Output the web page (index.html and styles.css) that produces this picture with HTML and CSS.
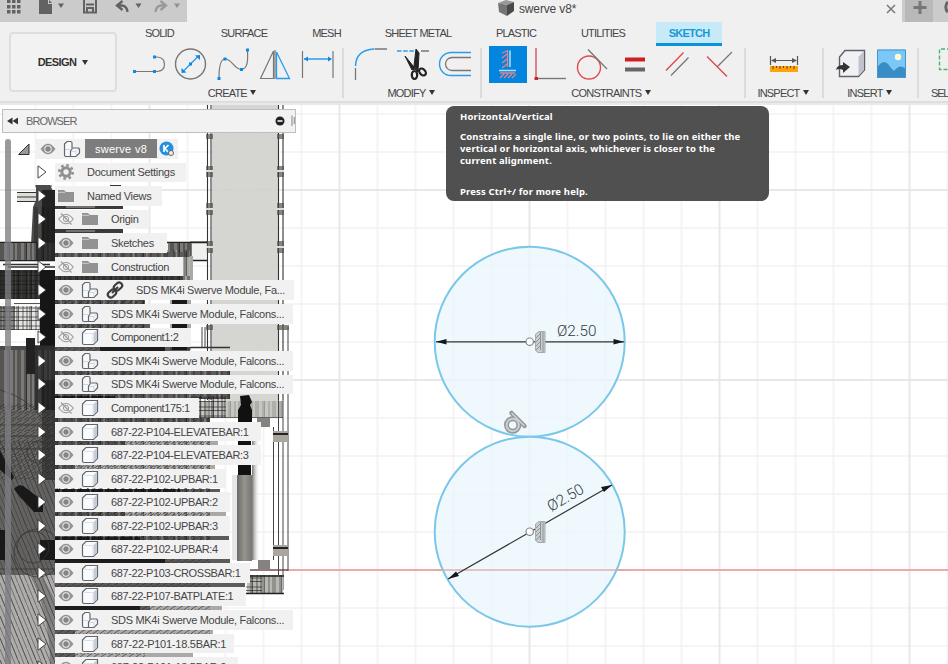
FILE: index.html
```html
<!DOCTYPE html>
<html lang="en">
<head>
<meta charset="utf-8">
<title>swerve v8*</title>
<link rel="stylesheet" href="styles.css">
</head>
<body>
<svg class="sprite" aria-hidden="true">
  <symbol id="eye" viewBox="0 0 16 12"><path d="M.5 6Q8-4.500 15.500 6Q8 16.500.500 6Z" fill="#949494"/><circle cx="8" cy="6" r="3.700" fill="#eee"/><circle cx="8" cy="6" r="2.700" fill="#858585"/></symbol>
  <symbol id="eye-off" viewBox="0 0 16 12"><path d="M.7 6Q8-3 15.300 6Q8 15.500.700 6ZM3 .5L13.500 11.500" fill="none" stroke="#999" stroke-width="1.100"/><circle cx="8" cy="6" r="2.600" fill="none" stroke="#999"/></symbol>
  <symbol id="folder" viewBox="0 0 16 14"><path d="M0 1H6L8 3H16V13H0Z" fill="#929292"/><path d="M0 3.300H7" stroke="#ddd" stroke-width=".8"/></symbol>
  <symbol id="box" viewBox="0 0 18 18"><path d="M1.500 5L5 1.500H16.500V12.500L12.500 16.500H3Q1.500 16.500 1.500 15Z" fill="#fafbfc" stroke="#62676f" stroke-width="1.200"/><path d="M12.500 5L16 2V12.500L12.500 16Z" fill="#c5ccd5"/><path d="M2.500 5.500H12V15.500" fill="none" stroke="#dde1e7"/></symbol>
  <symbol id="assembly" viewBox="0 0 18 18"><path d="M1.500 4L4 1.500H7.500Q9 1.500 9 3V8H15.500L16.500 9V13L13 16.500H3Q1.500 16.500 1.500 15Z" fill="#f7f8fa" stroke="#62676f" stroke-width="1.200"/><path d="M7.500 16V11L9.500 8.500" fill="none" stroke="#62676f" stroke-width="1.200"/><path d="M2 9.500H7M13 15.500V11.500L15.500 9M8 11.500H13" fill="none" stroke="#cfd4dc"/></symbol>
  <symbol id="arrow" viewBox="0 0 10 14"><path d="M1 .8L9 7L1 13.200Z" fill="#fff" stroke="#333" stroke-width=".9"/></symbol>
  <symbol id="link" viewBox="0 0 18 18"><g fill="none" stroke="#3c3c3c" stroke-width="2.200"><rect x="7.500" y="2.500" width="9" height="6" rx="3" transform="rotate(-42 12 5.500)"/><rect x="1.500" y="9.500" width="9" height="6" rx="3" transform="rotate(-42 6 12.500)"/><path d="M6 12L12 6"/></g></symbol>
  <symbol id="gear" viewBox="0 0 16 16"><circle cx="8" cy="8" r="6.700" fill="none" stroke="#909090" stroke-width="2.600" stroke-dasharray="2.630 2.630"/><circle cx="8" cy="8" r="4.200" fill="none" stroke="#909090" stroke-width="3"/></symbol>
</svg>

<header class="titlebar">
  <svg class="quick" width="187" height="22" viewBox="0 0 187 22">
    <g fill="#626262"><path d="M7 0h3.500v3h-3.500zM12 0h3.500v3h-3.500zM17 0h3.500v3h-3.500zM7 5h3.500v3.500h-3.500zM12 5h3.500v3.500h-3.500zM17 5h3.500v3.500h-3.500zM7 10h3.500v3.500h-3.500zM12 10h3.500v3.500h-3.500zM17 10h3.500v3.500h-3.500z"/><path d="M39 0H48V4H52V14H39Z"/><path d="M49 0L52 3H49Z"/><path d="M58 3.500H64L61 8ZM135.500 3.500H141.500L138.500 8Z"/></g>
    <path d="M84 0V12.500H96V0M87 12V8H93V12M86 4.500H94" fill="none" stroke="#626262" stroke-width="2"/>
    <path d="M122.500 1L117 5.500L122.500 10M117.500 5.500H122Q127 6 127.500 12" fill="none" stroke="#626262" stroke-width="2.300"/>
    <path d="M160.500 1L166 5.500L160.500 10M165.500 5.500H161Q156 6 155.500 12" fill="none" stroke="#999" stroke-width="2.300"/><path d="M174 3.500H180L177 8Z" fill="#909090"/>
  </svg>
  <div class="doc-tab">
    <svg width="17" height="17" viewBox="0 0 17 17"><path d="M0 3L8 0L16 2L9 5Z" fill="#999"/><path d="M0 3L9 5V16L1 12Z" fill="#757575"/><path d="M9 5L16 2V11L9 16Z" fill="#4a4a4a"/></svg>
    <span class="doc-name">swerve v8*</span>
    <svg class="close" width="10" height="10" viewBox="0 0 10 10"><path d="M1 1L9 9M9 1L1 9" stroke="#777" stroke-width="1.500"/></svg>
  </div>
  <svg class="new-tab" width="46" height="22" viewBox="902 0 46 22"><path d="M905 0H933V22H905Z" fill="#b9b9b9"/><path d="M920 1V14M913.500 7.500H926.500" stroke="#777" stroke-width="3"/><path d="M948 2A5 6 0 0 0 948 12" fill="none" stroke="#666" stroke-width="3"/></svg>
</header>

<section class="ribbon">
  <div class="workspace"><button class="design">DESIGN <i class="caret"></i></button></div>
  <div class="tools">
    <nav class="tabs"><span>SOLID</span><span>SURFACE</span><span>MESH</span><span>SHEET METAL</span><span>PLASTIC</span><span>UTILITIES</span><span class="active">SKETCH</span></nav>
    <div class="groups">
      <div class="group create">
        <svg width="220" height="38" viewBox="122 46 220 38"><g fill="none" stroke="#777" stroke-width="1.200"><path d="M134 71.500H153M153 57H156Q163.500 57.500 163.500 64.300T156 71.500H153"/><circle cx="189.500" cy="64" r="15" stroke-width="1.400"/><path d="M218 78C218 65 220 59 224 59C231 59 233 69 240 69.500C247 69 247 60 246.500 50"/><path d="M272.500 51V78.500H259.500ZM274 50V79M301.500 51V78M332 51V78"/></g><g fill="none" stroke="#279cec" stroke-width="1.300"><path d="M183 70.500L197 56.500M275.500 52V78.500H288.500ZM303 59H330"/></g><g fill="#078bea"><path d="M132 70h3v3h-3zM152 55.500h3v3h-3zM152 70h3v3h-3zM188 62.500h3v3h-3zM216.500 77h3v3h-3zM222.500 57.500h3v3h-3zM239 68h3v3h-3zM245 48.500h3v3h-3zM180.500 73V68L185.500 72.500ZM199 55V60L194 55.500ZM303 59L307 56.500V61.500ZM331 59L327 56.500V61.500Z"/></g></svg>
        <span>CREATE <i class="caret"></i></span>
      </div>
      <div class="group modify">
        <svg width="136" height="38" viewBox="343 46 136 38"><g fill="none" stroke="#777" stroke-width="1.300"><path d="M354.500 68V80M373.500 49H386M420 51H428M470 57.500H451A6.500 6.500 0 0 0 451 70.500H470"/></g><g fill="none" stroke="#279cec" stroke-width="1.400"><path d="M354.500 66Q355 50 373 49"/><path d="M396 51H413" stroke-dasharray="4.500 1.700"/><path d="M470 52.500H450A11.500 11.500 0 0 0 450 75.500H470"/></g><path d="M404 56L417 72L414 69L411 70ZM415 49L418 53L417 71L413 66Z" fill="#222" stroke="#222"/><g fill="none" stroke="#222" stroke-width="2.200"><ellipse cx="413.500" cy="75" rx="2.700" ry="4"/><ellipse cx="421.500" cy="72" rx="2.700" ry="4" transform="rotate(-45 421.500 72)"/></g></svg>
        <span>MODIFY <i class="caret"></i></span>
      </div>
      <div class="group constraints">
        <svg width="263" height="38" viewBox="480 46 263 38"><path d="M488 45.500H526V83H488Z" fill="#0485dd"/><g fill="none" stroke="#e0838c" stroke-width="1.300"><path d="M506.500 50V67M501 53L506 51M501 58L506 54M501 63L506 59M501 68L506 64M499 73H514M499 78L503 74M503 78L507 74M507 78L511 74M511 78L515 74"/></g><path d="M509 50.500V67M498 70.500H515" stroke="#b9dbf5" stroke-width="1.500"/><path d="M535 48V77" stroke="#d65057" stroke-width="1.400"/><path d="M537 78.500H565" stroke="#777" stroke-width="1.400"/><path d="M533.500 77H537V80H533.500Z" fill="#c7262b"/><circle cx="588" cy="67.500" r="11.500" fill="none" stroke="#df4a4c" stroke-width="1.400"/><path d="M587 49.500L606 69" stroke="#777" stroke-width="1.300"/><path d="M624 57.500H644V61.500H624Z" fill="#d01e22"/><path d="M624 67.500H644V71.500H624Z" fill="#666"/><path d="M665 70.500L682.500 52.500M706 56.500L726 76.500" stroke="#df4a4c" stroke-width="1.400"/><path d="M670 75.500L687.500 57.500M716.500 66.500L731 52" stroke="#777" stroke-width="1.300"/></svg>
        <span>CONSTRAINTS <i class="caret"></i></span>
      </div>
      <div class="group inspect">
        <svg width="77" height="38" viewBox="744 46 77 38"><path d="M769.500 56V65M796.500 56V65M771 60.500H795" stroke="#555" stroke-width="1.200"/><path d="M770 60.500L775 58V63ZM796 60.500L791 58V63Z" fill="#555"/><path d="M769 66H797V72H769Z" fill="#ffa30c"/><path d="M772 66v3M775.500 66v2M779 66v3M782.500 66v2M786 66v3M789.500 66v2M793 66v3" stroke="#5c4520"/></svg>
        <span>INSPECT <i class="caret"></i></span>
      </div>
      <div class="group insert">
        <svg width="94" height="38" viewBox="822 46 94 38"><path d="M838.500 57L844 50.500H863.500V70L857.500 76.500H838.500Z" fill="#eff1f5" stroke="#5e6268" stroke-width="1.400"/><path d="M857.500 57L863 51V70L857.500 76Z" fill="#bfc4cc"/><path d="M835 70Q836 65 842 65V62L849 67L842 73V70Q838 68 835 70Z" fill="#333"/><path d="M876 49.500H905V78H876Z" fill="#7bc7f8"/><circle cx="897" cy="57" r="3.200" fill="#fffbd1"/><path d="M876 68Q883 56 890 68L893 71Q899 63 905 69V78H876Z" fill="#398dc5"/><path d="M876.500 50H904.500V77.500H876.500Z" fill="none" stroke="#4a95c8"/></svg>
        <span>INSERT <i class="caret"></i></span>
      </div>
      <div class="group select"><svg width="31" height="38" viewBox="917 46 31 38"><path d="M950 49H938.500V69.500H950" fill="none" stroke="#43b966" stroke-width="1.400" stroke-dasharray="4 2"/></svg><span>SEL</span></div>
    </div>
  </div>
</section>

<main class="viewport">
  <svg class="canvas" width="948" height="559" viewBox="0 105 948 559">
    <defs>
      <pattern id="minor" x="34.500" y="151" width="38" height="38" patternUnits="userSpaceOnUse"><path d="M1 0V38M0 1H38" stroke="#f2f2f2" stroke-width="1.600"/></pattern>
      <pattern id="major" x="148.500" y="189" width="190" height="190" patternUnits="userSpaceOnUse"><path d="M1 0V190M0 1H190" stroke="#e3e3e3" stroke-width="1.300"/></pattern>
      <pattern id="mesh" width="13" height="9" patternUnits="userSpaceOnUse"><path d="M1 0V9M4 0V9M5.500 0V9M10 0V9M0 2H13M0 5.500H13" stroke="#161616" stroke-opacity=".75" stroke-width=".8"/></pattern>
      <pattern id="ribs" width="17" height="30" patternUnits="userSpaceOnUse"><path d="M1 0V30M3 0V30M8 0V30M9.500 0V30M14 0V30" stroke="#181818" stroke-opacity=".75" stroke-width="1"/></pattern>
      <pattern id="hatch" width="7" height="6" patternUnits="userSpaceOnUse"><path d="M-1 6L7 0M2 7L9 2M-2 2L2 -1" stroke="#222" stroke-opacity=".6" stroke-width="1"/></pattern>
      <pattern id="curl" width="9" height="22" patternUnits="userSpaceOnUse"><path d="M0 0L9 22M-4.500 -11L9 22M4.500 0L9 11M0 11L4.500 22" fill="none" stroke="#333" stroke-opacity=".5" stroke-width="1"/></pattern>
      <pattern id="noise" width="43" height="24" patternUnits="userSpaceOnUse"><path d="M2 0V24M7 0V24M13 0V24M14.500 0V24M22 0V24M29 0V24M36 0V24M38 0V24" stroke="#000" stroke-opacity=".55"/><path d="M4.500 0V24M18 0V24M33 0V24" stroke="#fff" stroke-opacity=".3" stroke-width="1.500"/></pattern>
      <linearGradient id="column" x1="0" x2="1"><stop offset="0" stop-color="#6b6a66"/><stop offset=".5" stop-color="#96948f"/><stop offset="1" stop-color="#77756f"/></linearGradient>
      <linearGradient id="fade" x1="0" x2="1"><stop offset="0" stop-color="#777"/><stop offset="1" stop-color="#fff" stop-opacity="0"/></linearGradient>
    </defs>
    <path d="M0 105H948V664H0Z" fill="#fff"/><path d="M0 105H948V664H0Z" fill="url(#minor)"/><path d="M0 105H948V664H0Z" fill="url(#major)"/>
    <path d="M0 570H948" stroke="#ecaaaa" stroke-width="2"/>

    <path d="M212 105H278V402H212Z" fill="#cfcfcb" fill-opacity=".88"/>
    <path d="M207.500 105V400M211 105V400M278.500 105V400M283 105V400M207 242H190" stroke="#333" stroke-width="1.100" fill="none"/>
    <path d="M206 134h7v5h-7zM277 134h7v5h-7zM206 166h7v11h-7zM277 166h7v11h-7zM206 203h7v12h-7zM277 203h7v12h-7zM206 241h7v12h-7zM277 241h7v12h-7zM206 325h7v5h-7zM277 325h12v5h-12z" fill="#514e46" fill-opacity=".68"/>
    <path d="M206 171H213M277 171H284M206 209H213M277 209H284M206 247H213M277 247H284" stroke="#ddd" stroke-width="2"/>

    <path d="M17 192H55V202H17Z" fill="#dededb"/><path d="M17 192.500H55M17 197H55M17 201.500H55M35 186H52M110 185.500H121" stroke="#333"/>
    <path d="M36 185H50L55 195V245H31L33 207L36 200Z" fill="#4b4b49"/><path d="M42 190H55V245H42Z" fill="#222"/><path d="M33 207H55V244H33Z" fill="url(#ribs)"/>
    <path d="M55 205H123V209H55ZM55 229H123V233H55Z" fill="#3a3a3a"/><path d="M66 207H95M66 231H95" stroke="#aaa"/>
    <path d="M0 242H207V260H0Z" fill="#ebebe8" fill-opacity=".75"/><path d="M0 242.500H207M0 260.500H207" stroke="#222" stroke-width="1.500"/>
    <path d="M0 243H55V260H0ZM168 243H192V260H168Z" fill="#7b7a76"/><path d="M36 243H55V260H36Z" fill="#333"/><path d="M0 243H55V260H0ZM168 243H192V258H168Z" fill="url(#ribs)"/>
    <path d="M183 256H193V285H183Z" fill="#aaa9a3"/><path d="M3 264.500H50M8 267H55" stroke="#333" stroke-width="1.500"/>
    <path d="M0 270H55V299H0ZM55 276H183V281H55Z" fill="#3e3e3d"/><path d="M0 270H55V299H0ZM55 276H190V281H55Z" fill="url(#ribs)"/><path d="M0 270H55V299H0Z" fill="url(#mesh)"/>
    <path d="M14 303.500H42" stroke="#555"/>
    <path d="M0 306H15V330H0Z" fill="#8b8a87"/><path d="M15 306H40V330H15Z" fill="#e4e4e2"/><path d="M0 306H40V330H0Z" fill="url(#mesh)"/>
    <path d="M40 270H55V360H40Z" fill="#161616"/>
    <path d="M0 346H55V410H0Z" fill="#7b7976"/><path d="M0 346H55V410H0Z" fill="url(#ribs)"/><path d="M0 346H55V350H0Z" fill="#4a4a49"/>
    <path d="M26 338H35V374H26Z" fill="#222"/><path d="M35 345H55V410H35Z" fill="#222" fill-opacity=".72"/>
    <path d="M0 410H55V480H0Z" fill="#686764"/><path d="M0 404H55V480H0Z" fill="url(#hatch)"/>
    <path d="M42 380H55V540H42Z" fill="#111" fill-opacity=".45"/>
    <path d="M0 480H55V575H0Z" fill="#636260"/><path d="M0 440H55V575H0Z" fill="url(#curl)"/>
    <path d="M0 575H55V664H0Z" fill="#adacaa"/><path d="M42 575L55 600V664H50Q50 615 30 575Z" fill="#6b6a68" fill-opacity=".65"/><path d="M0 575H55V664H0Z" fill="url(#curl)"/>
    <path d="M14 489Q20 482 26 488L43 501V512H34L20 497ZM0 530H5V560H0ZM40 540H55V560H40ZM0 450L14 477L12 480L0 470Z" fill="#191919"/>
    <g fill="none" stroke="#333" stroke-opacity=".7"><circle cx="33" cy="547" r="16"/><circle cx="38" cy="553" r="24"/><circle cx="38" cy="452" r="11"/><path d="M0 390Q55 405 55 470M0 425H55M0 436H55M0 449H55M0 569H55"/></g>

    <g id="gaps" fill="#5c5b59"><path d="M55 252H190V257H55ZM55 300H145V305H55ZM55 323H150V328H55ZM55 347H190V352H55ZM55 370H230V375H55ZM55 394H230V399H55ZM55 418H210V422H55ZM55 441H218V446H55ZM55 465H215V469H55ZM55 489H220V493H55ZM55 512H226V517H55ZM55 536H229V540H55ZM55 559H230V564H55ZM55 583H245V587H55ZM55 606H222V611H55ZM55 630H213V635H55ZM55 653H193V658H55Z"/><path d="M55 489H180V492H55ZM55 559H165V563H55ZM55 537H140V540H55ZM55 606H140V610H55ZM55 396H115V399H55ZM100 347H165V351H100Z" fill="#1c1c1c"/></g>
    <path d="M125 441H218V446H125ZM75 465H215V469H75ZM125 512H226V517H125ZM150 606H222V611H150ZM75 630H213V635H75ZM75 653H193V658H75Z" fill="#ddd" fill-opacity=".6"/>
    <path d="M55 300H145V658H55ZM145 418H210V650H145Z" fill="url(#hatch)"/><path d="M55 250H190V276H55ZM55 300H145V347H55ZM55 370H230V399H55ZM55 418H210V540H55Z" fill="url(#noise)" fill-opacity=".8"/>
    <path d="M172 298H187V350H172Z" fill="#171717"/><path d="M170 300H193V350H170Z" fill="url(#ribs)"/>
    <path d="M190 347.500H230M195 388H231M199 405H280M195 417H283" stroke="#333" stroke-width="1.300"/>
    <path d="M190 401H283V417H190Z" fill="#c6c6c2"/><path d="M190 396H226V418H190Z" fill="url(#mesh)"/><path d="M190 401H283V417H190Z" fill="url(#ribs)" fill-opacity=".35"/>
    <path d="M240 396L249 395L252 402L250 405L252 410V422H251V475H238V410L241 405Z" fill="#111"/><path d="M252 440H260V560H252Z" fill="url(#fade)"/><path d="M232 475H238V560H232Z" fill="#e6e6e6"/><path d="M237 475H252V561H237Z" fill="url(#column)"/>
    <path d="M202 327V347M205 327V347M278.500 400V590M283 400V590M288 327V571M273.500 427V560M250 570H288" stroke="#444" fill="none" stroke-width="1"/>
    <path d="M273 431H288V442H273ZM273 545H288V556H273Z" fill="#aaa69d"/><path d="M273 434H288M273 548H288" stroke="#222" stroke-width="2"/>
    <path d="M257 418H270V427H257ZM258 560H270V570H258Z" fill="#85837f"/>
    <path d="M249 575H283V594H249Z" fill="#b8b8b4"/><path d="M246 575H262V594H246Z" fill="url(#mesh)"/><path d="M262 575H283V594H262Z" fill="url(#ribs)" fill-opacity=".65"/><path d="M245 593.500H284M250 576H284" stroke="#222" stroke-width="1.400"/>

    <g fill="#e9f5fc" fill-opacity=".75" stroke="#7bc7e9" stroke-width="2"><circle cx="529.700" cy="341.700" r="95"/><circle cx="529.700" cy="531.700" r="95"/></g>
    <path d="M435 570H625" stroke="#e4a2a6" stroke-opacity=".7" stroke-width="1.500"/>
    <g stroke="#333" stroke-width="1.200"><path d="M436 341.800H624M448 579L612 485"/></g>
    <g fill="#101820"><path d="M436 341.800L446.500 339V344.500ZM624 341.800L613.500 339V344.500ZM448 579L459 576L456 571.500ZM612 485L601 487L604 492Z"/></g>
    <g fill="#fff" stroke="#888" stroke-width="1.200"><circle cx="529.700" cy="341.700" r="3.700"/><circle cx="529.700" cy="531.700" r="3.700"/></g>
    <g id="fixed"><path d="M535.500 334L539 331.500H545V352.500H538L535.500 350.500Z" fill="#c9cdcf" stroke="#a5abae"/><path d="M540.500 332V350M543 332V352M536 338L540 334M536 342L540 338M536 346L540 342M536 350L540 346" fill="none" stroke="#8e9498" stroke-width="1"/></g>
    <use href="#fixed" y="190"/>
    <g fill="none"><circle cx="512.700" cy="425" r="6.200" stroke="#92979a" stroke-width="5"/><path d="M511.500 413L524.500 426" stroke="#92979a" stroke-width="4.500" stroke-linecap="round"/><circle cx="512.700" cy="425" r="6.200" stroke="#cbd0d2" stroke-width="2"/><path d="M511.500 413L524.500 426" stroke="#d2d6d8" stroke-width="1.500"/></g>
    <text x="557" y="336" class="dimension">Ø2.50</text><text x="551" y="512" class="dimension" transform="rotate(-30 551 512)">Ø2.50</text>
  </svg>

  <aside class="browser">
    <div class="browser-head"><svg width="12" height="8" viewBox="0 0 12 8"><path d="M5.500 .5V7.500L0 4ZM11 .5V7.500L5.500 4Z" fill="#333"/></svg><span>BROWSER</span><svg class="collapse" width="20" height="18" viewBox="0 0 20 18"><circle cx="5" cy="9" r="4.500" fill="#222"/><path d="M2.500 9H7.500" stroke="#fff" stroke-width="1.500"/><path d="M17 3.500V14M19.300 5V12" stroke="#999" stroke-width="1.200"/></svg></div>
    <div class="scrollbar"></div>
    <ul class="tree">
      <li class="root"><svg class="open" width="12" height="12" viewBox="0 0 12 12"><path d="M.5 11.500L11 1V11.500Z" fill="#999" stroke="#333"/></svg><div class="row"><svg class="eye"><use href="#eye"/></svg><svg class="part"><use href="#assembly"/></svg><b>swerve v8</b><svg class="user" width="16" height="16" viewBox="0 0 16 16"><circle cx="7.500" cy="7.500" r="7" fill="#2590df"/><path d="M5 4V11M9.500 4L6 7.500L9 11" fill="none" stroke="#fff" stroke-width="1.700"/><circle cx="12" cy="12" r="2.500" fill="#eee" stroke="#666"/></svg></div></li>
      <li><svg class="arrow"><use href="#arrow"/></svg><div class="row shallow"><svg class="gear"><use href="#gear"/></svg><span>Document Settings</span></div></li>
      <li><svg class="arrow"><use href="#arrow"/></svg><div class="row shallow"><svg class="folder"><use href="#folder"/></svg><span>Named Views</span></div></li>
      <li><svg class="arrow"><use href="#arrow"/></svg><div class="row"><svg class="eye"><use href="#eye-off"/></svg><svg class="folder"><use href="#folder"/></svg><span>Origin</span></div></li>
      <li><svg class="arrow"><use href="#arrow"/></svg><div class="row"><svg class="eye"><use href="#eye"/></svg><svg class="folder"><use href="#folder"/></svg><span>Sketches</span></div></li>
      <li><svg class="arrow"><use href="#arrow"/></svg><div class="row"><svg class="eye"><use href="#eye-off"/></svg><svg class="folder"><use href="#folder"/></svg><span>Construction</span></div></li>
      <li><svg class="arrow"><use href="#arrow"/></svg><div class="row linked"><svg class="eye"><use href="#eye"/></svg><svg class="part"><use href="#assembly"/></svg><svg class="link"><use href="#link"/></svg><span>SDS MK4i Swerve Module, Fa...</span></div></li>
      <li><svg class="arrow"><use href="#arrow"/></svg><div class="row"><svg class="eye"><use href="#eye"/></svg><svg class="part"><use href="#assembly"/></svg><span>SDS MK4i Swerve Module, Falcons...</span></div></li>
      <li><svg class="arrow"><use href="#arrow"/></svg><div class="row"><svg class="eye"><use href="#eye-off"/></svg><svg class="part"><use href="#box"/></svg><span class="code">Component1:2</span></div></li>
      <li><svg class="arrow"><use href="#arrow"/></svg><div class="row"><svg class="eye"><use href="#eye"/></svg><svg class="part"><use href="#assembly"/></svg><span>SDS MK4i Swerve Module, Falcons...</span></div></li>
      <li><svg class="arrow"><use href="#arrow"/></svg><div class="row"><svg class="eye"><use href="#eye"/></svg><svg class="part"><use href="#assembly"/></svg><span>SDS MK4i Swerve Module, Falcons...</span></div></li>
      <li><svg class="arrow"><use href="#arrow"/></svg><div class="row"><svg class="eye"><use href="#eye-off"/></svg><svg class="part"><use href="#box"/></svg><span class="code">Component175:1</span></div></li>
      <li><svg class="arrow"><use href="#arrow"/></svg><div class="row"><svg class="eye"><use href="#eye"/></svg><svg class="part"><use href="#box"/></svg><span class="code">687-22-P104-ELEVATEBAR:1</span></div></li>
      <li><svg class="arrow"><use href="#arrow"/></svg><div class="row"><svg class="eye"><use href="#eye"/></svg><svg class="part"><use href="#box"/></svg><span class="code">687-22-P104-ELEVATEBAR:3</span></div></li>
      <li><svg class="arrow"><use href="#arrow"/></svg><div class="row"><svg class="eye"><use href="#eye"/></svg><svg class="part"><use href="#box"/></svg><span class="code">687-22-P102-UPBAR:1</span></div></li>
      <li><svg class="arrow"><use href="#arrow"/></svg><div class="row"><svg class="eye"><use href="#eye"/></svg><svg class="part"><use href="#box"/></svg><span class="code">687-22-P102-UPBAR:2</span></div></li>
      <li><svg class="arrow"><use href="#arrow"/></svg><div class="row"><svg class="eye"><use href="#eye"/></svg><svg class="part"><use href="#box"/></svg><span class="code">687-22-P102-UPBAR:3</span></div></li>
      <li><svg class="arrow"><use href="#arrow"/></svg><div class="row"><svg class="eye"><use href="#eye"/></svg><svg class="part"><use href="#box"/></svg><span class="code">687-22-P102-UPBAR:4</span></div></li>
      <li><svg class="arrow"><use href="#arrow"/></svg><div class="row"><svg class="eye"><use href="#eye"/></svg><svg class="part"><use href="#box"/></svg><span class="code">687-22-P103-CROSSBAR:1</span></div></li>
      <li><svg class="arrow"><use href="#arrow"/></svg><div class="row"><svg class="eye"><use href="#eye"/></svg><svg class="part"><use href="#box"/></svg><span class="code">687-22-P107-BATPLATE:1</span></div></li>
      <li><svg class="arrow"><use href="#arrow"/></svg><div class="row"><svg class="eye"><use href="#eye"/></svg><svg class="part"><use href="#assembly"/></svg><span>SDS MK4i Swerve Module, Falcons...</span></div></li>
      <li><svg class="arrow"><use href="#arrow"/></svg><div class="row"><svg class="eye"><use href="#eye"/></svg><svg class="part"><use href="#box"/></svg><span class="code wide">687-22-P101-18.5BAR:1</span></div></li>
      <li><svg class="arrow"><use href="#arrow"/></svg><div class="row"><svg class="eye"><use href="#eye"/></svg><svg class="part"><use href="#box"/></svg><span class="code wide">687-22-P101-18.5BAR:2</span></div></li>
    </ul>
  </aside>

  <div class="tooltip" role="tooltip"><h2>Horizontal/Vertical</h2><p>Constrains a single line, or two points, to lie on either the<br>vertical or horizontal axis, whichever is closer to the<br>current alignment.</p><p class="help">Press Ctrl+/ for more help.</p></div>
</main>
</body>
</html>
```
FILE: styles.css
```css
* { box-sizing: border-box; }
body { margin: 0; width: 948px; height: 664px; overflow: hidden; background: #f0f0f0; color: #454545; font: 11px/14px "Liberation Sans", Arial, sans-serif; }
svg { display: block; flex: none; }
.sprite { position: absolute; width: 0; height: 0; }
.titlebar { display: flex; height: 22px; }
.quick, .new-tab { background: #cbcbcb; }
.doc-tab { flex: 1; display: flex; align-items: flex-start; padding-left: 311px; }
.doc-name { margin: 2px 0 0 4px; font-size: 12px; letter-spacing: -0.15px; }
.close { margin: 4px 6px 0 auto; }
.ribbon { display: flex; height: 83px; border-bottom: 2px solid #e9e9e9; box-shadow: inset 0 -2px #dedede; }
.workspace { width: 122px; padding: 10px 0 0 9px; }
.design { display: flex; align-items: center; justify-content: center; gap: 5px; width: 108px; height: 60px; padding: 0; border: 2px solid #dedede; border-radius: 4px; background: #f2f2f2; color: #333; font: bold 11px "Liberation Sans", sans-serif; letter-spacing: -.6px; }
.caret { display: inline-block; width: 0; height: 0; margin-left: 1px; border: 3px solid transparent; border-top: 5px solid #333; border-bottom: 0; vertical-align: 2px; }
.tools { width: 826px; flex: none; }
.tabs { display: flex; height: 24px; letter-spacing: -.8px; text-align: center; }
.tabs span { padding-top: 4px; }
.tabs span:nth-child(1) { width: 75px; }
.tabs span:nth-child(2) { width: 94px; }
.tabs span:nth-child(3) { width: 71px; }
.tabs span:nth-child(4) { width: 112px; }
.tabs span:nth-child(5) { width: 84px; }
.tabs span:nth-child(6) { width: 90px; }
.tabs .active { width: 66px; margin-left: 8px; border-bottom: 3px solid #0895d7; background: #c8e9f7; color: #129bd8; font-weight: bold; letter-spacing: -.75px; }
.groups { display: flex; height: 56px; }
.group { position: relative; flex: none; display: flex; flex-direction: column; align-items: center; letter-spacing: -.8px; }
.group span { margin: 2px 1px 0 0; white-space: nowrap; }
.group:not(.create)::before { content: ""; position: absolute; left: -1px; top: 2px; width: 2px; height: 50px; background: #dcdcdc; }
.create { width: 221px; }
.modify { width: 137px; margin-right: 1px; }
.constraints { margin-right: 1px; }
.constraints span { margin-right: 3px; }
.inspect { margin-right: 1px; }
.insert { margin-right: 1px; }
.select { width: 31px; align-items: flex-start; }
.select span { padding-left: 13px; letter-spacing: -1.2px; }
.viewport { position: relative; height: 559px; overflow: hidden; background: #fff; }
.canvas, .browser { position: absolute; left: 0; top: 0; }
.browser { width: 300px; height: 559px; }
.browser-head { display: flex; align-items: center; width: 294px; height: 24px; margin: 4px 0 0 2px; padding-left: 4px; border: 1px solid #bebebe; background: #f2f2f2; color: #666; }
.browser-head span { margin-left: 7px; letter-spacing: -.9px; }
.collapse { margin-left: auto; }
.scrollbar { position: absolute; left: 5px; top: 34px; width: 6px; height: 540px; border-radius: 3px; background: rgba(125,125,130,.78); }
.tree { list-style: none; margin: 6px 0 0; padding: 0; }
.tree li { display: flex; align-items: center; height: 19.600px; margin-bottom: 3.970px; padding-left: 37px; }
.arrow { width: 10px; height: 14px; }
.row { display: flex; align-items: center; height: 19.600px; margin-left: 8px; padding-left: 3px; background: #f1f1f1; white-space: nowrap; letter-spacing: -.3px; }
.tree .root { padding-left: 18px; }
.root .row { width: 142px; margin-left: 6px; padding-left: 4px; }
.row b { width: 72px; height: 19px; margin-left: 4px; padding-top: 3px; background: #7d7d7d; color: #fff; text-align: center; font-weight: normal; letter-spacing: .3px; }
.row .user { margin-left: 2px; }
.root .part { margin-left: 7px; }
.eye { width: 16px; height: 12px; }
.part { width: 18px; height: 18px; margin-left: 7px; }
.folder { width: 16px; height: 14px; margin-left: 8px; }
.row span { margin-left: 13px; }
.row .folder + span { margin-left: 13px; }
.row .part + span { margin-left: 12px; }
.shallow .folder { margin-left: 0; }
.gear { width: 16px; height: 16px; }
.link { width: 18px; height: 18px; margin-left: 7px; }
.row.linked span { margin-left: 12px; }
.row .code { letter-spacing: -.4px; }
.row .wide { letter-spacing: -.25px; }
li:nth-child(2) .row { width: 131px; }
li:nth-child(3) .row { width: 107px; }
li:nth-child(4) .row { width: 93px; }
li:nth-child(5) .row { width: 112px; }
li:nth-child(6) .row { width: 128px; }
li:nth-child(7) .row { width: 239px; }
li:nth-child(8) .row, li:nth-child(10) .row, li:nth-child(11) .row, li:nth-child(21) .row { width: 238px; }
li:nth-child(9) .row { width: 136px; }
li:nth-child(12) .row { width: 144px; }
li:nth-child(13) .row, li:nth-child(14) .row { width: 206px; }
li:nth-child(15) .row { width: 171px; }
li:nth-child(16) .row, li:nth-child(17) .row, li:nth-child(18) .row { width: 175px; }
li:nth-child(19) .row { width: 195px; }
li:nth-child(20) .row { width: 191px; }
li:nth-child(22) .row { width: 179px; }
li:nth-child(23) .row { width: 183px; }
.dimension { font: 300 15.300px Roboto, sans-serif; fill: #33393d; }
.tooltip { position: absolute; left: 446px; top: 1px; width: 323px; height: 95px; padding: 5px 14px; border-radius: 8px; background: #505050; color: #fff; font: bold 9.500px/12px "Noto Sans", sans-serif; letter-spacing: .15px; white-space: nowrap; }
.tooltip h2 { margin: 0; font: inherit; }
.tooltip p { margin: 8px 0 0; }
.tooltip .help { margin-top: 19px; }
```
